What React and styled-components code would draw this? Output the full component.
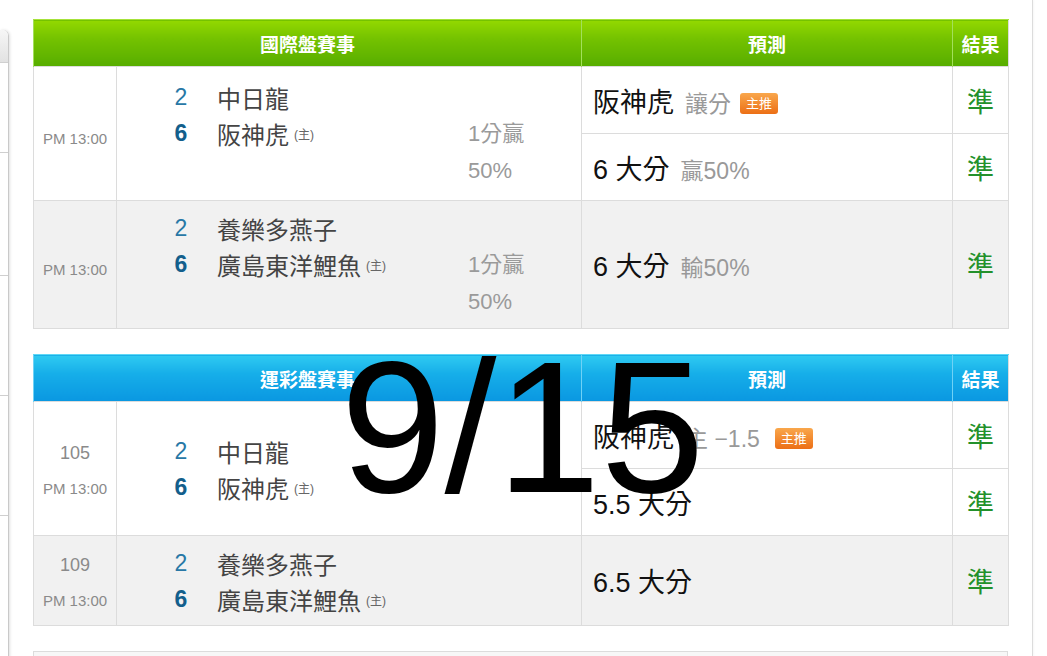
import React from "react";
import styled, { createGlobalStyle, css } from "styled-components";

const GlobalStyle = createGlobalStyle`
  body {
    margin: 0;
    background: #fff;
    font-family: "Liberation Sans", "Noto Sans CJK TC", sans-serif;
  }
`;

// Data
const sections = [
  {
    tone: "green",
    title: "國際盤賽事",
    games: [
      {
        time: "PM 13:00",
        away: { score: 2, name: "中日龍" },
        home: { score: 6, name: "阪神虎" },
        odds: ["1分贏", "50%"],
        picks: [
          { main: "阪神虎", note: "讓分", star: true },
          { main: "6 大分", note: "贏50%" },
        ],
      },
      {
        time: "PM 13:00",
        shade: true,
        away: { score: 2, name: "養樂多燕子" },
        home: { score: 6, name: "廣島東洋鯉魚" },
        odds: ["1分贏", "50%"],
        picks: [{ main: "6 大分", note: "輸50%" }],
      },
    ],
  },
  {
    tone: "blue",
    title: "運彩盤賽事",
    games: [
      {
        no: "105",
        time: "PM 13:00",
        away: { score: 2, name: "中日龍" },
        home: { score: 6, name: "阪神虎" },
        picks: [
          { main: "阪神虎", note: "主 −1.5", star: true, wide: true },
          { main: "5.5 大分" },
        ],
      },
      {
        no: "109",
        time: "PM 13:00",
        shade: true,
        away: { score: 2, name: "養樂多燕子" },
        home: { score: 6, name: "廣島東洋鯉魚" },
        picks: [{ main: "6.5 大分" }],
      },
    ],
  },
];

const sideRows = [90, 123, 120, 120, 200];

const App = () => {
  return (
    <>
      <GlobalStyle />
      <Page>
        <Sidebar>
          <SideHead />
          {sideRows.map((h, i) => (
            <SideRow key={i} style={{ height: h }} />
          ))}
        </Sidebar>

        <Main>
          {sections.map((sec) => (
            <Board key={sec.title}>
              <colgroup>
                <col style={{ width: 83 }} />
                <col style={{ width: 465 }} />
                <col style={{ width: 371 }} />
                <col style={{ width: 56 }} />
              </colgroup>
              <thead>
                <tr>
                  <HeadCell $tone={sec.tone} colSpan={2}>
                    {sec.title}
                  </HeadCell>
                  <HeadCell $tone={sec.tone}>預測</HeadCell>
                  <HeadCell $tone={sec.tone}>結果</HeadCell>
                </tr>
              </thead>
              <tbody>
                {sec.games.map((g, gi) =>
                  g.picks.map((p, pi) => (
                    <tr key={gi + "-" + pi}>
                      {pi === 0 && (
                        <>
                          <TimeCell
                            $shade={g.shade}
                            $single={!g.no}
                            rowSpan={g.picks.length}
                          >
                            {g.no && <GameNo>{g.no}</GameNo>}
                            <div>{g.time}</div>
                          </TimeCell>
                          <TeamsCell $shade={g.shade} rowSpan={g.picks.length}>
                            <TeamsWrap>
                              <TeamList>
                                <TeamLine>
                                  <Score>{g.away.score}</Score>
                                  <TeamName>{g.away.name}</TeamName>
                                </TeamLine>
                                <TeamLine>
                                  <Score $win>{g.home.score}</Score>
                                  <TeamName>{g.home.name}</TeamName>
                                  <HomeTag>(主)</HomeTag>
                                </TeamLine>
                              </TeamList>
                              {g.odds && (
                                <Odds>
                                  {g.odds.map((o) => (
                                    <div key={o}>{o}</div>
                                  ))}
                                </Odds>
                              )}
                            </TeamsWrap>
                          </TeamsCell>
                        </>
                      )}
                      <PickCell $shade={g.shade}>
                        <PickMain>{p.main}</PickMain>
                        {p.note && <PickNote>{p.note}</PickNote>}
                        {p.star && <Badge $wide={p.wide}>主推</Badge>}
                      </PickCell>
                      <ResultCell $shade={g.shade}>準</ResultCell>
                    </tr>
                  ))
                )}
              </tbody>
            </Board>
          ))}
          <NextBoard />
        </Main>

        <RightRail />
        <Counter>9/15</Counter>
      </Page>
    </>
  );
};

const Page = styled.div`
  position: relative;
  display: flex;
  align-items: flex-start;
  height: 656px;
  overflow: hidden;
`;

const Sidebar = styled.div`
  flex-shrink: 0;
  width: 8px;
  margin-top: 30px;
  border-right: 1px solid #c9c9c9;
  border-top-right-radius: 6px;
  box-shadow: 1px 0 3px rgba(0, 0, 0, 0.12);
  overflow: hidden;
`;

const SideHead = styled.div`
  height: 32px;
  background: linear-gradient(#f6f6f6, #e2e2e2);
  border-bottom: 1px solid #d0d0d0;
`;

const SideRow = styled.div`
  box-sizing: border-box;
  border-bottom: 1px solid #cfcfcf;
  background: #fff;
`;

const Main = styled.div`
  flex-shrink: 0;
  width: 975px;
  margin-left: 24px;
  padding-top: 19px;
`;

const RightRail = styled.div`
  align-self: stretch;
  margin-left: 24px;
  width: 0;
  border-left: 1px solid #dcdcdc;
  box-shadow: 1px 0 2px rgba(0, 0, 0, 0.05);
`;

const Board = styled.table`
  width: 975px;
  border-collapse: collapse;
  table-layout: fixed;
  border: 1px solid #dcdcdc;
  margin-bottom: 25px;
`;

const tones = {
  green: css`
    background: linear-gradient(#93d800, #74c200 40%, #57ad00);
    border-top: 1px solid #a6e23a;
    border-left: 1px solid #a3e05a;
  `,
  blue: css`
    background: linear-gradient(#2fcaf1, #16aee9 40%, #0a97e1);
    border-top: 1px solid #5fd8f5;
    border-left: 1px solid #6fd2f6;
  `,
};

const HeadCell = styled.th`
  height: 46px;
  padding: 0;
  color: #fff;
  font-size: 19px;
  font-weight: bold;
  text-align: center;
  ${(p) => tones[p.$tone]}
`;

const bodyCell = css`
  border: 1px solid #dcdcdc;
  background: ${(p) => (p.$shade ? "#f1f1f1" : "#fff")};
  vertical-align: middle;
`;

const TimeCell = styled.td`
  ${bodyCell}
  padding: ${(p) => (p.$single ? "10px" : "4px")} 0 0;
  text-align: center;
  color: #8a8a8a;
  font-size: 15px;
  line-height: 36px;
`;

const GameNo = styled.div`
  font-size: 18px;
`;

const TeamsCell = styled.td`
  ${bodyCell}
  padding: 9px 0 8px 50px;
`;

const TeamsWrap = styled.div`
  display: flex;
`;

const TeamList = styled.div`
  width: 302px;
`;

const TeamLine = styled.div`
  display: flex;
  align-items: center;
  height: 36px;
`;

const Score = styled.span`
  width: 28px;
  text-align: center;
  font-size: 23px;
  font-weight: ${(p) => (p.$win ? "bold" : "normal")};
  color: ${(p) => (p.$win ? "#135f8c" : "#2878a6")};
`;

const TeamName = styled.span`
  margin-left: 22px;
  font-size: 24px;
  color: #444;
`;

const HomeTag = styled.span`
  margin-left: 5px;
  font-size: 12px;
  color: #666;
`;

const Odds = styled.div`
  padding-top: 36px;
  margin-left: -1px;
  font-size: 22px;
  line-height: 37px;
  color: #9a9a9a;
`;

const PickCell = styled.td`
  ${bodyCell}
  height: 66px;
  padding: 0 11px;
  white-space: nowrap;
`;

const PickMain = styled.span`
  font-size: 27px;
  color: #111;
`;

const PickNote = styled.span`
  margin-left: 11px;
  font-size: 23px;
  color: #999;
`;

const Badge = styled.span`
  display: inline-block;
  vertical-align: 4px;
  margin-left: ${(p) => (p.$wide ? "15px" : "9px")};
  width: 38px;
  height: 21px;
  line-height: 21px;
  border-radius: 3px;
  background: linear-gradient(#f9a74c, #ec6f16);
  color: #fff;
  font-size: 13px;
  text-align: center;
`;

const ResultCell = styled.td`
  ${bodyCell}
  padding: 0;
  text-align: center;
  font-size: 27px;
  color: #23912b;
`;

const NextBoard = styled.div`
  height: 40px;
  border: 1px solid #dcdcdc;
  background: #f7f7f7;
`;

const Counter = styled.div`
  position: absolute;
  left: 0;
  right: 0;
  top: 334px;
  padding-right: 2px;
  text-align: center;
  font-family: "Liberation Sans", sans-serif;
  font-size: 187px;
  line-height: 1;
  color: #000;
  pointer-events: none;
`;

export default App;
